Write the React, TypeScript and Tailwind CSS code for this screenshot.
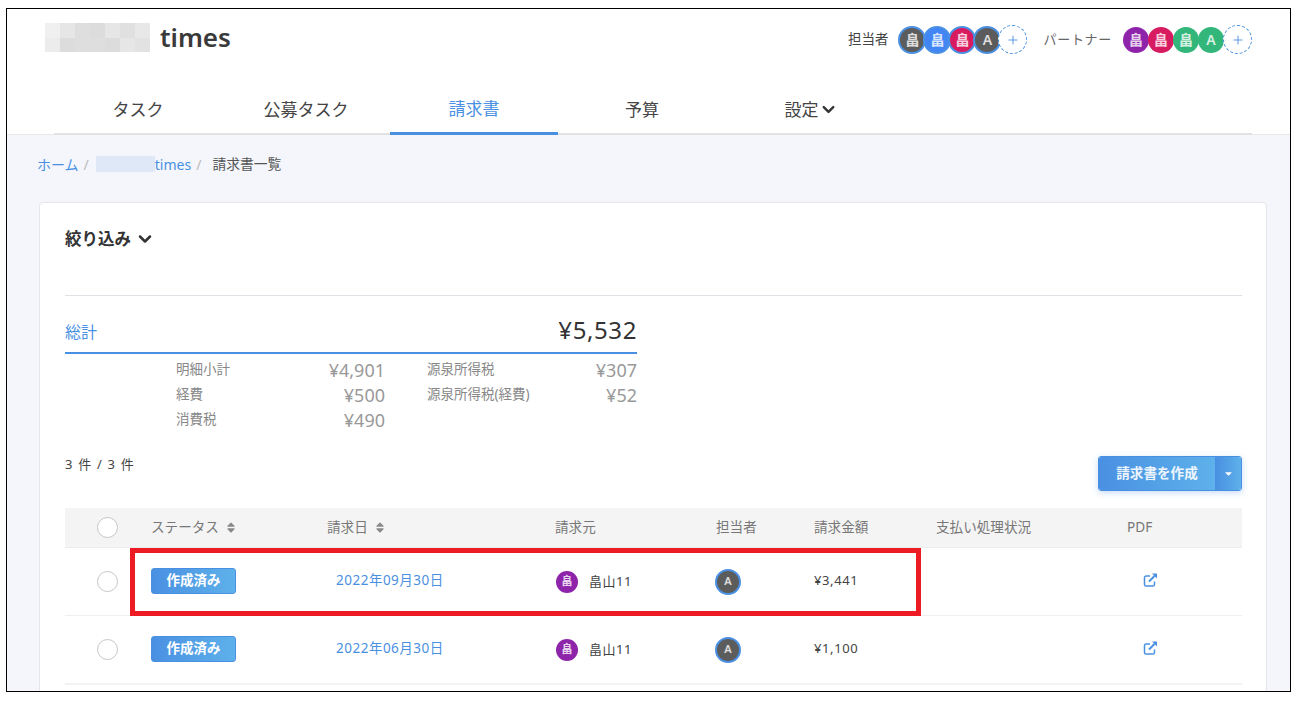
import { ChevronDown, Plus } from "lucide-react";
import { FaSort, FaCaretDown } from "react-icons/fa";

function Avatar({ color, text, ring, size }: { color: string; text: string; ring?: boolean; size: string }) {
  return (
    <div
      className={`${size} ${color} ${ring ? "border-2 border-[#4a90e2]" : ""} shrink-0 rounded-full flex items-center justify-center text-white/80 font-semibold`}
    >
      {text}
    </div>
  );
}

function AddButton() {
  return (
    <div className="w-[29px] h-[29px] shrink-0 rounded-full border border-dashed border-[#4a90e2] bg-white flex items-center justify-center">
      <Plus className="w-[14px] h-[14px] text-[#5a9ae6]" strokeWidth={1.75} />
    </div>
  );
}

function LinkIcon() {
  return (
    <svg viewBox="0 0 14 14" className="w-[15px] h-[14px] text-[#4a90e2]" fill="none" stroke="currentColor">
      <path d="M6.5 3H2.6A1.6 1.6 0 0 0 1 4.6v6.8A1.6 1.6 0 0 0 2.6 13h6.8a1.6 1.6 0 0 0 1.6-1.6V8.5" strokeWidth="1.5" />
      <path d="M5.5 8.5 11 3" strokeWidth="2" />
      <path d="M8.5 .6h5v5z" fill="currentColor" stroke="none" />
    </svg>
  );
}

function Mosaic() {
  const cells = [
    "bg-[#f0f0f0]", "bg-[#e6e6e6]", "bg-[#dedede]", "bg-[#dcdcdc]", "bg-[#e6e6e6]", "bg-[#e0e0e0]", "bg-[#e8e8e8]",
    "bg-[#ececec]", "bg-[#dcdcdc]", "bg-[#dedede]", "bg-[#dedede]", "bg-[#dcdcdc]", "bg-[#e6e6e6]", "bg-[#e2e2e2]",
  ];
  return (
    <div className="grid grid-cols-7 grid-rows-2 w-[105px] h-[29px]">
      {cells.map((c, i) => (
        <div key={i} className={c} />
      ))}
    </div>
  );
}

const tabs = ["タスク", "公募タスク", "請求書", "予算"];
const gridCols = "grid grid-cols-[86px_176px_228px_161px_98px_122px_191px_115px]";

function Circle() {
  return (
    <div className="flex justify-center pr-[1px]">
      <div className="w-[21px] h-[21px] rounded-full border-[1.5px] border-[#c6c6c6] bg-white" />
    </div>
  );
}

function Row({ date, amount, last }: { date: string; amount: string; last?: boolean }) {
  return (
    <div className={`${gridCols} items-center ${last ? "h-[69px] border-b-2 border-[#f3f3f3]" : "h-[68px] border-b border-[#efefef]"}`}>
      <Circle />
      <div className="-mt-[2px]">
        <div className="w-[85px] h-[26px] rounded-[3px] border border-[#4a90e2] bg-gradient-to-r from-[#4a90e2] to-[#5eb1ea] flex items-center justify-center text-white text-[13.5px] font-bold">
          作成済み
        </div>
      </div>
      <div className="pl-[9px] text-[#4a90e2] text-[13.5px] tracking-[0.5px] -mt-[2px]">{date}</div>
      <div className="flex items-center">
        <Avatar color="bg-[#8e24aa]" text="畠" size="w-[22px] h-[22px] text-[11px] ml-[1px]" />
        <span className="ml-[11px] text-[13px] text-[#444] tracking-[0.5px]">畠山11</span>
      </div>
      <div className="-ml-[1px]">
        <Avatar color="bg-[#5c5c5c]" text="A" ring size="w-[26px] h-[26px] text-[11px]" />
      </div>
      <div className="text-[13px] text-[#444] tracking-[0.6px] -mt-[2px]">{amount}</div>
      <div />
      <div className="pl-[16px] -mt-[4px]">
        <LinkIcon />
      </div>
    </div>
  );
}

function Detail({ label, value }: { label: string; value: string }) {
  return (
    <div className="flex justify-between h-[25px] items-start">
      <span className="text-[13.5px] leading-[24px] text-[#888]">{label}</span>
      <span className="text-[18px] leading-[27px] text-[#999]">{value}</span>
    </div>
  );
}

function Head({ children, sort }: { children: string; sort?: boolean }) {
  return (
    <div className="flex items-center gap-[6px] text-[13.6px] text-[#777]">
      {children}
      {sort && <FaSort className="w-[12px] h-[13px] text-[#888]" />}
    </div>
  );
}

export default function App() {
  return (
    <div
      className="w-[1299px] h-[701px] bg-white pl-[6px] pt-[8px] overflow-hidden"
      style={{ fontFamily: '"Noto Sans", "Noto Sans CJK JP", sans-serif' }}
    >
      <div className="relative w-[1285px] h-[684px] border border-black bg-[#f4f6fb] overflow-hidden">
        <header className="bg-white h-[126px] border-b border-[#e8e8e8]">
          <div className="h-[77px] flex justify-between">
            <div className="flex items-start pl-[38px] pt-[14px]">
              <Mosaic />
              <span className="ml-[10px] -mt-[1px] text-[26px] leading-[30px] font-semibold text-[#3a3a3a]">times</span>
            </div>
            <div className="flex items-center h-[60px] pr-[38px] pt-[1px]">
              <span className="text-[13.5px] text-[#444] mr-[10px]">担当者</span>
              <div className="flex items-center -space-x-[3px]">
                <Avatar color="bg-[#5c5c5c]" text="畠" ring size="w-[28px] h-[28px] text-[14px]" />
                <Avatar color="bg-[#4285f4]" text="畠" ring size="w-[28px] h-[28px] text-[14px]" />
                <Avatar color="bg-[#d81b60]" text="畠" ring size="w-[28px] h-[28px] text-[14px]" />
                <Avatar color="bg-[#5c5c5c]" text="A" ring size="w-[28px] h-[28px] text-[14px]" />
                <AddButton />
              </div>
              <span className="ml-[16px] mr-[11px] text-[13px] text-[#666] tracking-[0.7px]">パートナー</span>
              <div className="flex items-center -space-x-[1px]">
                <Avatar color="bg-[#8e24aa]" text="畠" size="w-[26px] h-[26px] text-[14px]" />
                <Avatar color="bg-[#d81b60]" text="畠" size="w-[26px] h-[26px] text-[14px]" />
                <Avatar color="bg-[#33b679]" text="畠" size="w-[26px] h-[26px] text-[14px]" />
                <Avatar color="bg-[#33b679]" text="A" size="w-[26px] h-[26px] text-[14px]" />
                <AddButton />
              </div>
            </div>
          </div>
          <nav className="ml-[47px] w-[1198px] h-[49px] flex border-b-2 border-[#e2e2e2]">
            {tabs.map((t) => (
              <div
                key={t}
                className={`w-[168px] flex items-center justify-center text-[17px] ${
                  t === "請求書" ? "text-[#4a90e2] border-b-[3px] border-[#4a90e2] -mb-[2px]" : "text-[#444]"
                }`}
              >
                {t}
              </div>
            ))}
            <div className="w-[168px] pl-[2px] flex items-center justify-center text-[17px] text-[#444]">
              設定
              <ChevronDown className="w-[19px] h-[19px] text-[#333]" strokeWidth={3} />
            </div>
          </nav>
        </header>

        <div className="h-[58px] pl-[30px] flex items-center text-[14px]">
          <span className="text-[#4a90e2]">ホーム</span>
          <span className="ml-[5px] text-[#bbb]">/</span>
          <div className="ml-[7px] w-[59px] h-[16px] bg-[#dfe8f6]" />
          <span className="text-[#4a90e2]">times</span>
          <span className="ml-[5px] text-[#bbb]">/</span>
          <span className="ml-[11px] text-[13.8px] text-[#555]">請求書一覧</span>
        </div>

        <main className="mt-[9px] ml-[32px] w-[1228px] h-[520px] bg-white border border-[#e4e6ea] rounded-[4px] pl-[25px] pr-[24px]">
          <div className="h-[93px] border-b border-[#dfe1e6]">
            <div className="h-[72px] flex items-center text-[16.5px] font-semibold text-[#333]">
              絞り込み
              <ChevronDown className="ml-[4px] w-[20px] h-[20px] text-[#333]" strokeWidth={3} />
            </div>
          </div>

          <section className="w-[572px]">
            <div className="h-[58px] flex items-end justify-between border-b-2 border-[#4a90e2] pb-[6px]">
              <span className="text-[16px] leading-[24px] mb-[2px] text-[#4a90e2]">総計</span>
              <span className="text-[24px] leading-[32px] text-[#333] tracking-[0.6px]">¥5,532</span>
            </div>
            <div className="mt-[3px] ml-[111px] grid grid-cols-[209px_209px] gap-x-[42px]">
              <Detail label="明細小計" value="¥4,901" />
              <div className="-mr-[1px]">
                <Detail label="源泉所得税" value="¥307" />
              </div>
              <Detail label="経費" value="¥500" />
              <div className="-mr-[1px]">
                <Detail label="源泉所得税(経費)" value="¥52" />
              </div>
              <Detail label="消費税" value="¥490" />
            </div>
          </section>

          <div className="flex justify-between items-start pt-[24px]">
            <span className="text-[13px] leading-[16px] text-[#444] tracking-[1.2px]">3 件 / 3 件</span>
            <div className="flex w-[144px] h-[35px] rounded-[3px] overflow-hidden shadow-[0_2px_6px_rgba(74,144,226,0.3)] border border-[#4a90e2]">
              <div className="w-[116px] flex items-center justify-center text-[13.6px] font-semibold text-white/90 bg-gradient-to-r from-[#4a90e2] to-[#5eb1ea]">
                請求書を作成
              </div>
              <div className="flex-1 flex items-center justify-center bg-gradient-to-r from-[#4a90e2] to-[#5eb1ea] border-l border-[#4a90e2]">
                <FaCaretDown className="w-[11px] h-[11px] text-white" />
              </div>
            </div>
          </div>

          <div className="mt-[17px]">
            <div className={`${gridCols} items-center h-[40px] bg-[#f4f4f4] border-b border-[#ececec]`}>
              <Circle />
              <Head sort>ステータス</Head>
              <Head sort>請求日</Head>
              <Head>請求元</Head>
              <Head>担当者</Head>
              <Head>請求金額</Head>
              <Head>支払い処理状況</Head>
              <Head>PDF</Head>
            </div>
            <Row date="2022年09月30日" amount="¥3,441" />
            <Row date="2022年06月30日" amount="¥1,100" last />
          </div>
        </main>

        <div className="absolute left-[123px] top-[539px] w-[791px] h-[68px] border-[5px] border-[#ed1c24]" />
      </div>
    </div>
  );
}
